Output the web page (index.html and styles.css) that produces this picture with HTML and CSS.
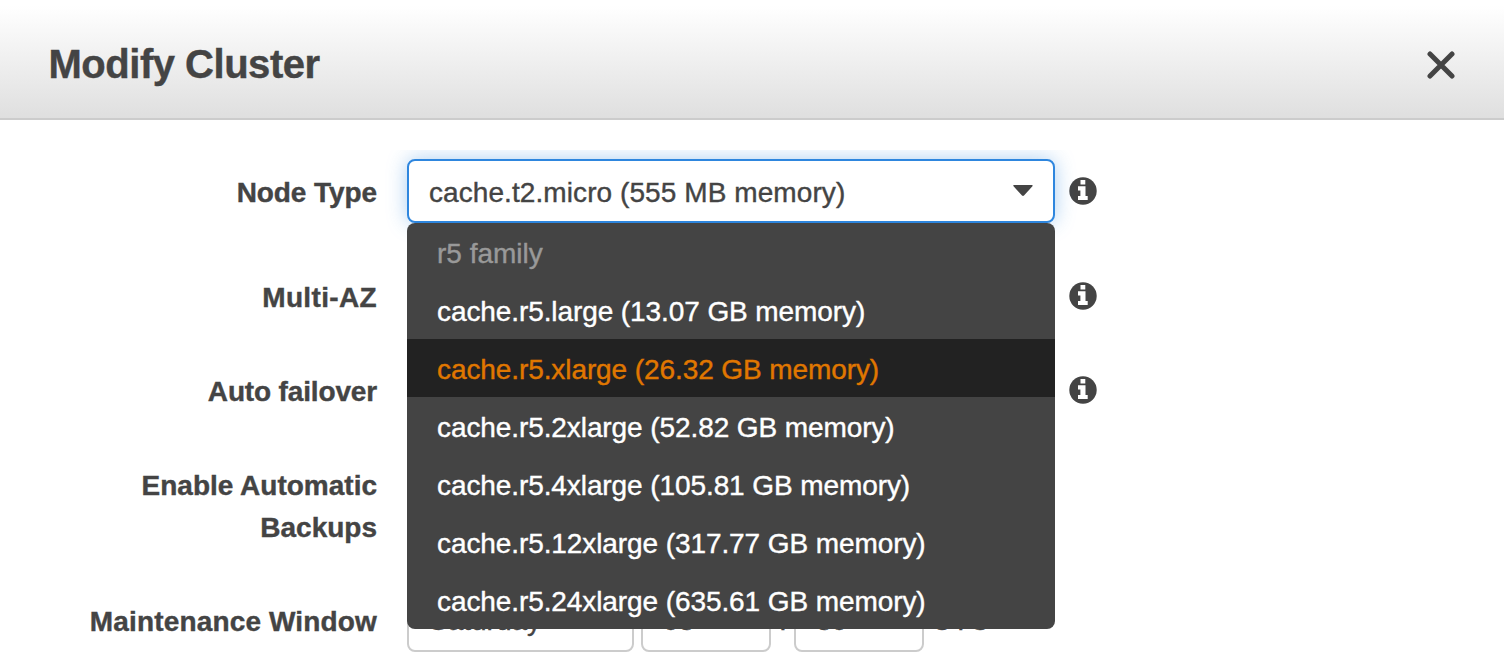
FILE: index.html
```html
<!DOCTYPE html>
<html lang="en">
<head>
<meta charset="utf-8">
<title>Modify Cluster</title>
<link rel="stylesheet" href="styles.css">
</head>
<body>
<svg class="defs" aria-hidden="true">
  <symbol id="info" viewBox="0 0 28 28">
    <circle cx="14" cy="14" r="13.7" fill="#444"/>
    <path fill="#fff" d="M11.500 3.100h4.800v4.300h-4.800zM9 9.300h7.500v9.600h2.200v4.200H9v-4.200h2.400v-5.400H9z"/>
  </symbol>
</svg>
<div class="dialog">
  <header class="header">
    <h1 class="title">Modify Cluster</h1>
    <svg class="close" viewBox="0 0 28 28"><path d="M3 3l22 22M25 3l-22 22"/></svg>
  </header>
  <main class="form">
    <div class="row row-node">
      <label class="label">Node Type</label>
      <div class="control">
        <div class="select select-open"><span class="value">cache.t2.micro (555 MB memory)</span>
          <svg class="arrow" viewBox="0 0 20 12"><path d="M1 0h18q1.500.8.2 1.600L11 10.600q-1 .9-2 0L.8 1.600Q-.5.200 1 0z"/></svg>
        </div>
        <ul class="menu">
          <li class="group">r5 family</li>
          <li class="option">cache.r5.large (13.07 GB memory)</li>
          <li class="option active">cache.r5.xlarge (26.32 GB memory)</li>
          <li class="option">cache.r5.2xlarge (52.82 GB memory)</li>
          <li class="option">cache.r5.4xlarge (105.81 GB memory)</li>
          <li class="option">cache.r5.12xlarge (317.77 GB memory)</li>
          <li class="option">cache.r5.24xlarge (635.61 GB memory)</li>
        </ul>
      </div>
      <svg class="info"><use href="#info"/></svg>
    </div>
    <div class="row row-az">
      <label class="label">Multi-AZ</label>
      <div class="control"></div>
      <svg class="info"><use href="#info"/></svg>
    </div>
    <div class="row row-failover">
      <label class="label">Auto failover</label>
      <div class="control"></div>
      <svg class="info"><use href="#info"/></svg>
    </div>
    <div class="row row-backups">
      <label class="label">Enable Automatic Backups</label>
      <div class="control"></div>
    </div>
    <div class="row row-window">
      <label class="label">Maintenance Window</label>
      <div class="control window">
        <div class="select day">Saturday</div>
        <div class="select hour">03</div>
        <span class="colon">:</span>
        <div class="select minute">30</div>
        <span class="utc">UTC</span>
      </div>
    </div>
  </main>
</div>
</body>
</html>
```
FILE: styles.css
```css
* { box-sizing: border-box; }

body {
  margin: 0;
  background: #fff;
  color: #444;
  font-family: "Helvetica Neue", "Liberation Sans", Arial, sans-serif;
  font-size: 28px;
  line-height: 42px;
  -webkit-text-stroke: 0.4px currentColor;
}

.defs { display: none; }

.dialog {
  width: 1504px;
  height: 656px;
  overflow: hidden;
}

.header {
  display: flex;
  align-items: center;
  justify-content: space-between;
  height: 120px;
  padding: 12px 49px 0 48.500px;
  border-bottom: 2px solid #ccc;
  background: linear-gradient(#fff, #fff 5%, #dfdfdf);
}

.title {
  margin: 0 0 2px;
  font-size: 40px;
  line-height: 48px;
  font-weight: bold;
  letter-spacing: -0.48px;
}

.close {
  width: 28px;
  height: 28px;
  fill: none;
  stroke: #444;
  stroke-width: 5;
  stroke-linecap: round;
}

.form {
  margin-top: 30px;
  height: 506px;
  padding-top: 9px;
  overflow: hidden;
}

.row {
  display: grid;
  grid-template-columns: 377px 648px 28px;
  column-gap: 30px;
  align-items: center;
}

.row-node { height: 64px; margin-bottom: 53px; }
.row-az { height: 42px; margin-bottom: 52px; }
.row-failover { height: 42px; margin-bottom: 52px; }
.row-backups { height: 84px; margin-bottom: 40px; }
.row-window { height: 64px; }

.label {
  padding: 1px 0 0 80px;
  font-weight: bold;
  text-align: right;
}

.row-node .label { padding-top: 3px; letter-spacing: -0.08px; }
.row-az .label { letter-spacing: 0.35px; }
.row-failover .label { letter-spacing: -0.15px; }
.row-window .label { padding-top: 3px; letter-spacing: 0.15px; }

.control { position: relative; }

.info {
  width: 28px;
  height: 28px;
  margin-left: -16px;
}

.row-az .info,
.row-failover .info { margin-bottom: 3px; }

.select {
  display: flex;
  align-items: center;
  justify-content: space-between;
  height: 64px;
  padding: 3px 20px 0;
  border: 2px solid #ccc;
  border-radius: 8px;
  background: #fff;
}

.select-open {
  border-color: #2e86de;
  box-shadow: 0 0 20px rgba(46, 134, 222, 0.4);
}

.value { letter-spacing: 0.08px; }

.arrow {
  width: 20px;
  height: 12px;
  margin-top: -4px;
  fill: #444;
}

.menu {
  position: absolute;
  top: 64px;
  left: 0;
  z-index: 2;
  width: 648px;
  margin: 0;
  padding: 0;
  overflow: hidden;
  list-style: none;
  border-radius: 8px;
  background: #444;
  color: #fff;
}

.group,
.option {
  height: 58px;
  padding: 10px 30px 6px;
}

.option { letter-spacing: -0.09px; }

.group { color: #999; }

.active {
  background: #222;
  color: #e07700;
}

.window { display: flex; align-items: center; }
.window .select { padding-top: 2px; }
.day { width: 227px; margin-right: 7px; }
.hour { width: 130px; }
.colon { width: 23px; padding: 2px 0 0 8px; }
.minute { width: 130px; margin-right: 8px; }
.utc { padding-top: 2px; }
```
